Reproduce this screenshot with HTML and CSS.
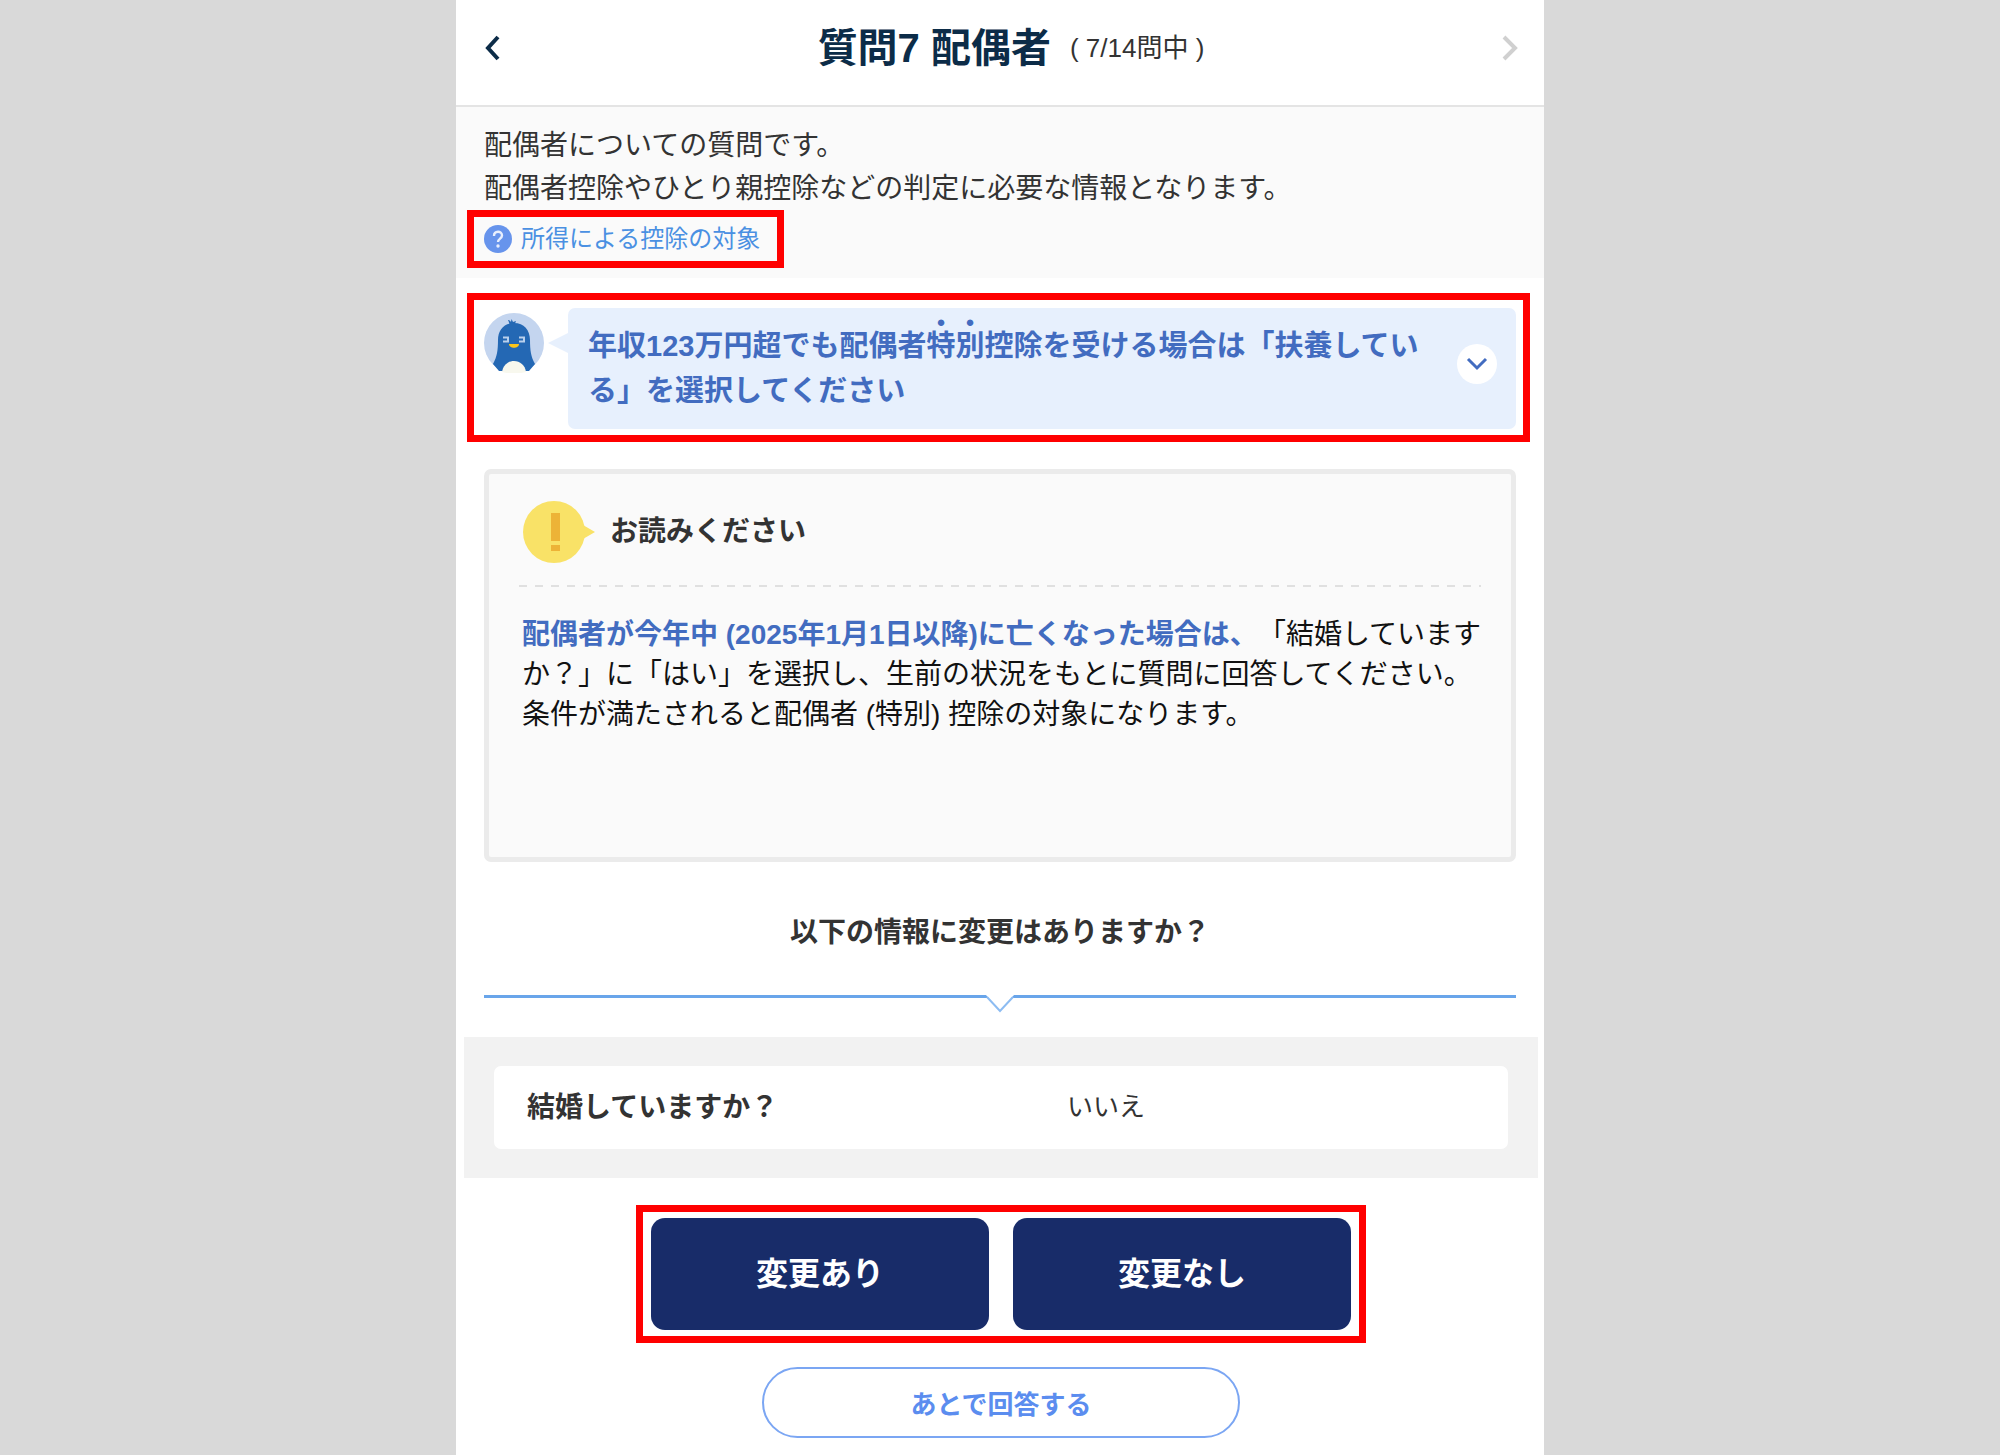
FILE: index.html
```
<!DOCTYPE html>
<html lang="ja">
<head>
  <meta charset="UTF-8">
  <meta name="viewport" content="width=device-width, initial-scale=1.0">
  <title>質問7 配偶者</title>
  <link rel="stylesheet" href="styles.css">
</head>
<body>
  <main class="panel">
    <header class="header">
      <button type="button" class="nav-btn" aria-label="前の質問">
        <svg width="16" height="26" viewBox="0 0 16 26"><path d="M14 2 4 13l10 11" fill="none" stroke="currentColor" stroke-width="4"/></svg>
      </button>
      <div class="title">
        <h1>質問7 配偶者</h1>
        <span>( 7/14問中 )</span>
      </div>
      <button type="button" class="nav-btn" aria-label="次の質問" disabled>
        <svg width="16" height="26" viewBox="0 0 16 26"><path d="M2 2l11 11L2 24" fill="none" stroke="currentColor" stroke-width="4"/></svg>
      </button>
    </header>

    <section class="intro">
      <p>配偶者についての質問です。<br>配偶者控除やひとり親控除などの判定に必要な情報となります。</p>
      <div class="marked marked-link">
        <a href="#" class="help">
          <svg width="28" height="28" viewBox="0 0 28 28">
            <circle cx="14" cy="14" r="14" fill="#6794ec"/>
            <path d="M10 11c0-5.500 8-5.500 8-.5 0 3-4 3.200-4 6.500" fill="none" stroke="#e8effd" stroke-width="2.400"/>
            <circle cx="14" cy="21" r="1.700" fill="#e8effd"/>
          </svg>
          所得による控除の対象
        </a>
      </div>
    </section>

    <section class="marked marked-advice">
      <svg class="avatar" width="60" height="60" viewBox="0 0 60 60">
        <circle cx="30" cy="30" r="30" fill="#c4d5ef"/>
        <path d="M26 12c-1-2-1-3-2-5 2 0 2 1 3 2l.5-3 1.500 3 3-1-1.500 4z" fill="#2468b4"/>
        <path d="M30 10c10 0 16 7 16 17 0 10 1 17 5 24l-6 7H15l-6-7c4-7 5-14 5-24 0-10 6-17 16-17z" fill="#2468b4"/>
        <path d="M18 59c1-7 6-11 12-11s11 4 12 11c-7 2-17 2-24 0z" fill="#f8f8ee"/>
        <path d="M19 24.500h5v4h-5M35 24.500h5v4h-5" fill="none" stroke="#b9d0ec" stroke-width="2"/>
        <path d="M25 31h10c0 5-10 5-10 0z" fill="#fbc51c"/>
      </svg>
      <div class="bubble">
        <p>年収123万円超でも配偶者<em>特別</em>控除を受ける場合は「扶養している」を選択してください</p>
        <button type="button" class="toggle" aria-label="開く">
          <svg width="22" height="14" viewBox="0 0 22 14"><path d="M2 2l9 9 9-9" fill="none" stroke="currentColor" stroke-width="3"/></svg>
        </button>
      </div>
    </section>

    <section class="notice">
      <div class="notice-head">
        <svg width="74" height="62" viewBox="0 0 74 62">
          <path d="M60 24l12 7-12 7z" fill="#f9e267"/>
          <circle cx="31" cy="31" r="31" fill="#f9e267"/>
          <path d="M28 12h9v28h-9zM28 44h9v6h-9z" fill="#edb337"/>
        </svg>
        <h2>お読みください</h2>
      </div>
      <p><strong>配偶者が今年中 (2025年1月1日以降)に亡くなった場合は、</strong>「結婚していますか？」に「はい」を選択し、生前の状況をもとに質問に回答してください。<br>条件が満たされると配偶者 (特別) 控除の対象になります。</p>
    </section>

    <section class="question">
      <h2>以下の情報に変更はありますか？</h2>
      <svg class="pointer" width="28" height="18" viewBox="0 0 28 18"><path d="M0 0h28L14 16z" fill="#fff"/><path d="M1 2l13 14L27 2" fill="none" stroke="#8dbcf2" stroke-width="2"/></svg>
    </section>

    <div class="answers">
      <dl class="answer">
        <dt>結婚していますか？</dt>
        <dd>いいえ</dd>
      </dl>
    </div>

    <div class="actions">
      <div class="marked marked-actions">
        <button type="button" class="btn-primary">変更あり</button>
        <button type="button" class="btn-primary">変更なし</button>
      </div>
      <button type="button" class="btn-later">あとで回答する</button>
    </div>
  </main>
</body>
</html>
```

FILE: styles.css
```
* {
  box-sizing: border-box;
}
body {
  margin: 0;
  background-color: #d9d9d9;
  color: #333;
  font-family: "Liberation Sans", "Noto Sans CJK JP", sans-serif;
  font-size: 28px;
  text-spacing-trim: space-all;
}
h1, h2, p, dl, dd {
  margin: 0;
}
h2 {
  font-size: 28px;
  line-height: 40px;
}
svg {
  display: block;
  flex: none;
}
button {
  padding: 0;
  border: none;
  font-family: inherit;
  cursor: pointer;
}
.panel {
  max-width: 1088px;
  min-height: 100vh;
  margin: 0 auto;
  padding-bottom: 16px;
  background-color: #fff;
}

/* header */
.header {
  display: flex;
  align-items: center;
  justify-content: space-between;
  height: 107px;
  padding: 0 26px 10px 28px;
  border-bottom: 2px solid #e4e4e4;
}
.nav-btn {
  background: none;
  color: #0c2c48;
}
.nav-btn:disabled {
  color: #d0d0d0;
}
.title {
  display: flex;
  align-items: center;
  gap: 19px;
  padding-left: 20px;
}
.title h1 {
  color: #0c2c48;
  font-size: 40px;
  line-height: 60px;
}
.title span {
  padding-bottom: 4px;
  font-size: 26px;
}

/* red frames */
.marked {
  border: 7px solid #f00;
}

.intro {
  padding: 17px 28px 10px 11px;
  background-color: #fafafa;
}
.intro p {
  padding-left: 17px;
  line-height: 43px;
}
.marked-link {
  width: fit-content;
  padding: 0 17px 0 10px;
}
.help {
  display: flex;
  align-items: center;
  gap: 9px;
  color: #4a90e2;
  font-size: 24px;
  line-height: 44px;
  text-decoration: none;
}

.marked-advice {
  display: flex;
  align-items: flex-start;
  gap: 24px;
  margin: 15px 14px 0 11px;
  padding: 8px 7px 6px 10px;
}
.avatar {
  margin-top: 5px;
}
.bubble {
  position: relative;
  display: flex;
  align-items: center;
  justify-content: space-between;
  flex: 1;
  min-height: 121px;
  padding: 0 19px 10px 20px;
  border-radius: 7px;
  background-color: #e7f0fd;
}
.bubble::before {
  content: "";
  position: absolute;
  top: 25px;
  left: -20px;
  border: 10px solid transparent;
  border-right: 20px solid #e7f0fd;
  border-left: none;
}
.bubble p {
  max-width: 840px;
  color: #426cc0;
  font-size: 29px;
  font-weight: bold;
  line-height: 45px;
}
.bubble em {
  font-style: normal;
  text-emphasis: filled circle;
}
.toggle {
  display: grid;
  place-items: center;
  flex: none;
  width: 40px;
  height: 40px;
  border-radius: 50%;
  background-color: #fff;
  color: #426cc0;
}

.notice {
  min-height: 393px;
  margin: 27px 28px 0;
  padding: 27px 22px 27px 30px;
  border: 5px solid #ebebeb;
  border-radius: 7px;
  background-color: #fafafa;
}
.notice-head {
  display: flex;
  align-items: center;
  gap: 13px;
  margin-right: 8px;
  padding: 0 4px 24px;
  background: repeating-linear-gradient(to right, #e0e0e0 0 8px, transparent 8px 16px) bottom / 100% 2px no-repeat;
}
.notice p {
  padding: 28px 0 0 3px;
  color: #111;
  line-height: 40px;
}
.notice strong {
  color: #426cc0;
}

.question {
  position: relative;
  margin: 51px 28px 0;
  padding-bottom: 42px;
  border-bottom: 3px solid #69a5ea;
  text-align: center;
}
.pointer {
  position: absolute;
  top: 100%;
  left: 50%;
  margin-left: -14px;
}

.answers {
  margin: 39px 6px 0 8px;
  padding: 29px 30px;
  background-color: #f2f2f2;
}
.answer {
  display: grid;
  grid-template-columns: 540px 1fr;
  align-items: center;
  padding: 21px 33px;
  border-radius: 7px;
  background-color: #fff;
  line-height: 41px;
}
.answer dt {
  font-weight: bold;
}
.answer dd {
  font-size: 26px;
}

/* buttons */
.actions {
  display: flex;
  flex-direction: column;
  align-items: center;
  gap: 24px;
  padding: 27px 0 0 2px;
}
.marked-actions {
  display: flex;
  gap: 24px;
  width: 730px;
  max-width: 100%;
  padding: 6px 8px;
}
.btn-primary {
  flex: 1;
  height: 112px;
  padding-bottom: 6px;
  border-radius: 14px;
  background-color: #182c69;
  color: #fff;
  font-size: 32px;
  font-weight: bold;
}
.btn-later {
  width: 478px;
  max-width: 100%;
  height: 71px;
  border: 2px solid #7ba6f3;
  border-radius: 36px;
  background-color: #fff;
  color: #5b8def;
  font-size: 26px;
  font-weight: bold;
}
```
